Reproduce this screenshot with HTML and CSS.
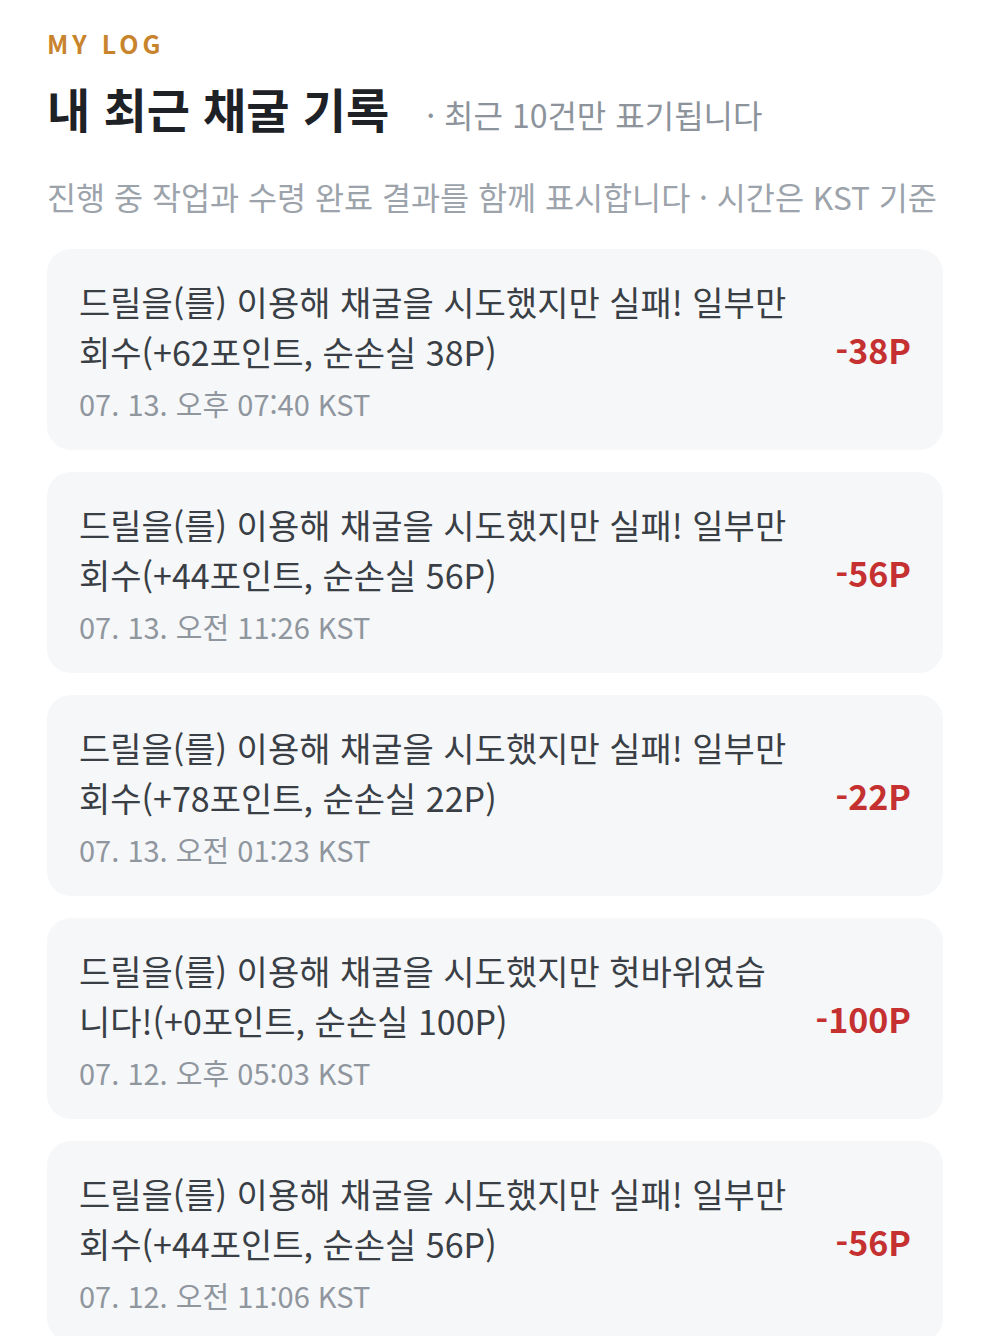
FILE: index.html
```html
<!DOCTYPE html>
<html lang="ko">
<head>
    <meta charset="UTF-8">
    <meta name="viewport" content="width=device-width, initial-scale=1.0">
    <title>내 최근 채굴 기록</title>
    <link rel="stylesheet" href="styles.css">
</head>
<body>
    <div class="container">
        <div class="eyebrow">MY LOG</div>
        <div class="title-row">
            <h1>내 최근 채굴 기록</h1>
            <span class="note">· 최근 10건만 표기됩니다</span>
        </div>
        <p class="desc">진행 중 작업과 수령 완료 결과를 함께 표시합니다 · 시간은 KST 기준</p>

        <div class="log-list">
            <div class="log-item">
                <div class="log-body">
                    <div class="log-msg">드릴을(를) 이용해 채굴을 시도했지만 실패! 일부만 회수(+62포인트, 순손실 38P)</div>
                    <div class="log-date">07. 13. 오후 07:40 KST</div>
                </div>
                <div class="log-amount">-38P</div>
            </div>
            <div class="log-item">
                <div class="log-body">
                    <div class="log-msg">드릴을(를) 이용해 채굴을 시도했지만 실패! 일부만 회수(+44포인트, 순손실 56P)</div>
                    <div class="log-date">07. 13. 오전 11:26 KST</div>
                </div>
                <div class="log-amount">-56P</div>
            </div>
            <div class="log-item">
                <div class="log-body">
                    <div class="log-msg">드릴을(를) 이용해 채굴을 시도했지만 실패! 일부만 회수(+78포인트, 순손실 22P)</div>
                    <div class="log-date">07. 13. 오전 01:23 KST</div>
                </div>
                <div class="log-amount">-22P</div>
            </div>
            <div class="log-item">
                <div class="log-body">
                    <div class="log-msg">드릴을(를) 이용해 채굴을 시도했지만 헛바위였습니다!(+0포인트, 순손실 100P)</div>
                    <div class="log-date">07. 12. 오후 05:03 KST</div>
                </div>
                <div class="log-amount">-100P</div>
            </div>
            <div class="log-item">
                <div class="log-body">
                    <div class="log-msg">드릴을(를) 이용해 채굴을 시도했지만 실패! 일부만 회수(+44포인트, 순손실 56P)</div>
                    <div class="log-date">07. 12. 오전 11:06 KST</div>
                </div>
                <div class="log-amount">-56P</div>
            </div>
        </div>
    </div>
</body>
</html>
```

FILE: styles.css
```css
body {
    font-family: "Noto Sans CJK KR", "Noto Sans", sans-serif;
    background-color: #ffffff;
    color: #1e2126;
    margin: 0;
    padding: 0;
}

.container {
    padding: 28px 43px 0 47px;
}

.eyebrow {
    font-size: 25px;
    line-height: 30px;
    font-weight: 700;
    letter-spacing: 4px;
    color: #c8842c;
}

.title-row {
    display: flex;
    align-items: baseline;
    gap: 37px;
    margin-top: 22px;
}

h1 {
    font-size: 47px;
    line-height: 56px;
    font-weight: 700;
    margin: 0;
    color: #1e2126;
}

.note {
    font-size: 32px;
    color: #8c939b;
}

.desc {
    font-size: 31.6px;
    line-height: 40px;
    color: #9ca3ab;
    margin: 39px 0 33px;
    white-space: nowrap;
}

.log-list {
    display: flex;
    flex-direction: column;
    gap: 22px;
}

.log-item {
    display: flex;
    align-items: center;
    gap: 24px;
    background-color: #f6f7f9;
    border-radius: 24px;
    padding: 28px 32px 29px;
}

.log-body {
    flex: 1;
}

.log-msg {
    font-size: 34px;
    line-height: 50px;
    color: #3a3f46;
}

.log-date {
    font-size: 29px;
    line-height: 36px;
    margin-top: 8px;
    color: #8f969e;
}

.log-amount {
    flex-shrink: 0;
    font-size: 34px;
    font-weight: 700;
    color: #c53030;
}
```
